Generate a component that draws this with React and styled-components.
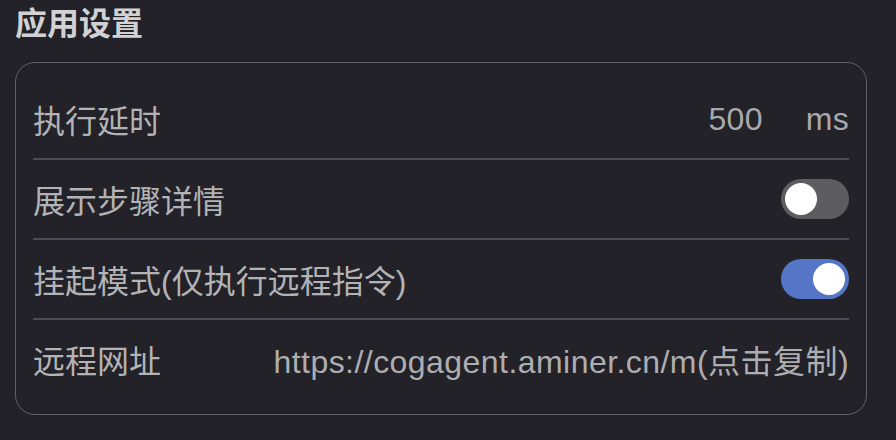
import React, { useState } from "react";
import styled, { createGlobalStyle } from "styled-components";

const GlobalStyle = createGlobalStyle`
  html, body {
    margin: 0;
    padding: 0;
    background: #222228;
  }
  body {
    font-family: "Liberation Sans", "Noto Sans CJK SC", sans-serif;
    -webkit-font-smoothing: antialiased;
  }
`;

const Page = styled.div`
  width: 896px;
  height: 440px;
  box-sizing: border-box;
  padding: 4px 29px 0 15px;
  background: #222228;
  overflow: hidden;
`;

const Title = styled.h2`
  margin: 0;
  height: 42px;
  line-height: 40px;
  font-size: 32px;
  font-weight: 700;
  color: #d2d2d4;
`;

const Card = styled.div`
  margin-top: 16px;
  border: 1.5px solid #606065;
  border-radius: 20px;
  padding: 17px 17px 16px;
`;

const Row = styled.div`
  display: flex;
  align-items: center;
  justify-content: space-between;
  height: 78px;
  border-bottom: ${(props) => (props.last ? "none" : "2px solid #4c4c52")};
  font-size: 32px;
  color: #b3b3b6;
`;

const Label = styled.span`
  white-space: nowrap;
`;

const Value = styled.div`
  display: flex;
  align-items: center;
  gap: 43px;
  color: #a9a9ac;
  letter-spacing: 0.3px;
`;

const Link = styled.span`
  color: #aeaeb1;
  cursor: pointer;
  white-space: nowrap;
  letter-spacing: 0.45px;
`;

const Track = styled.button`
  position: relative;
  width: 68px;
  height: 40px;
  border: none;
  border-radius: 20px;
  padding: 0;
  cursor: pointer;
  background: ${(props) => (props.on ? "#5576c6" : "#5d5d61")};

  &::after {
    content: "";
    position: absolute;
    top: 4px;
    left: ${(props) => (props.on ? "32px" : "4px")};
    width: 32px;
    height: 32px;
    border-radius: 50%;
    background: #ffffff;
    transition: left 0.2s;
  }
`;

function Toggle({ value, onChange }) {
  return <Track on={value ? 1 : 0} onClick={() => onChange(!value)} />;
}

function App() {
  const [showSteps, setShowSteps] = useState(false);
  const [suspend, setSuspend] = useState(true);

  return (
    <Page>
      <GlobalStyle />
      <Title>应用设置</Title>
      <Card>
        <Row>
          <Label>执行延时</Label>
          <Value>
            <span>500</span>
            <span>ms</span>
          </Value>
        </Row>
        <Row>
          <Label>展示步骤详情</Label>
          <Toggle value={showSteps} onChange={setShowSteps} />
        </Row>
        <Row>
          <Label>挂起模式(仅执行远程指令)</Label>
          <Toggle value={suspend} onChange={setSuspend} />
        </Row>
        <Row last>
          <Label>远程网址</Label>
          <Link>https://cogagent.aminer.cn/m(点击复制)</Link>
        </Row>
      </Card>
    </Page>
  );
}

export default App;
